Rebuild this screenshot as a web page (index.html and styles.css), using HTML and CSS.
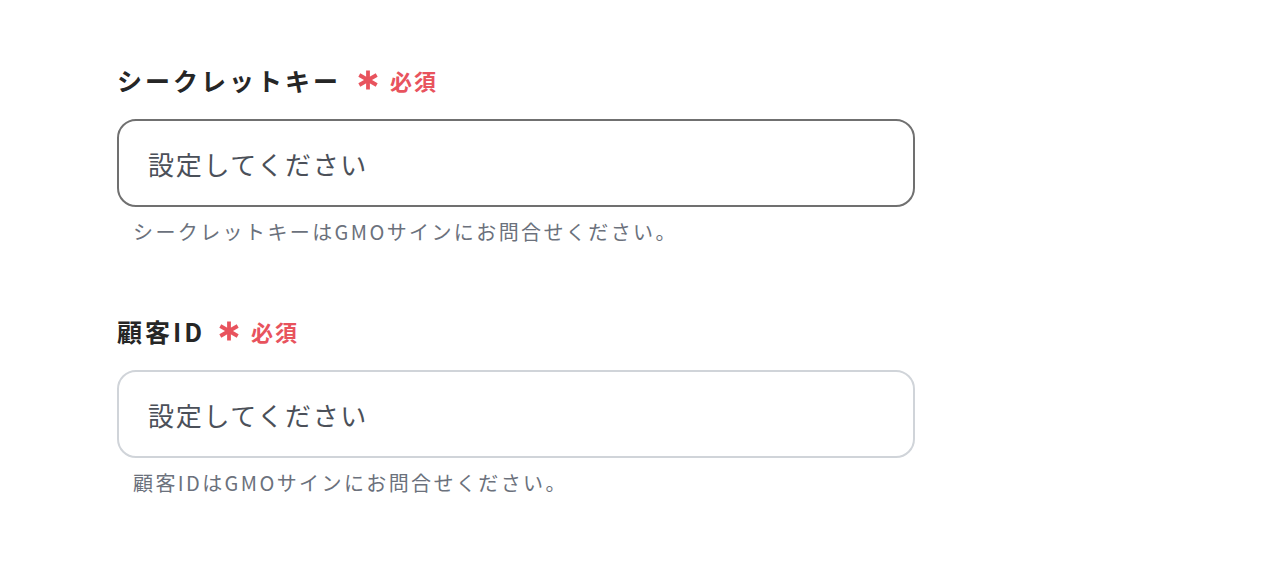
FILE: index.html
```html
<!DOCTYPE html>
<html lang="ja">
<head>
<meta charset="utf-8">
<link rel="stylesheet" href="styles.css">
</head>
<body>
<div class="form">
  <div class="field">
    <div class="label-row">
      <span class="label">シークレットキー</span>
      <span class="req">
        <svg class="ast" viewBox="0 0 22 20" width="22" height="20" aria-hidden="true">
          <g stroke="#e8535d" stroke-width="3.8" stroke-linecap="butt">
            <line x1="11" y1="0.5" x2="11" y2="19.5"/>
            <line x1="2.3" y1="5" x2="19.7" y2="15"/>
            <line x1="2.3" y1="15" x2="19.7" y2="5"/>
          </g>
        </svg>
        <span class="req-text">必須</span>
      </span>
    </div>
    <div class="input focused">設定してください</div>
    <div class="help">シークレットキーはGMOサインにお問合せください。</div>
  </div>
  <div class="field">
    <div class="label-row">
      <span class="label">顧客ID</span>
      <span class="req req-tight">
        <svg class="ast" viewBox="0 0 22 20" width="22" height="20" aria-hidden="true">
          <g stroke="#e8535d" stroke-width="3.8" stroke-linecap="butt">
            <line x1="11" y1="0.5" x2="11" y2="19.5"/>
            <line x1="2.3" y1="5" x2="19.7" y2="15"/>
            <line x1="2.3" y1="15" x2="19.7" y2="5"/>
          </g>
        </svg>
        <span class="req-text">必須</span>
      </span>
    </div>
    <div class="input">設定してください</div>
    <div class="help">顧客IDはGMOサインにお問合せください。</div>
  </div>
</div>
</body>
</html>
```
FILE: styles.css
```css
html, body {
  margin: 0;
  background: #ffffff;
  font-family: "Noto Sans CJK JP", "Noto Sans", sans-serif;
}
.form {
  padding: 65px 0 0 117px;
  display: flex;
  flex-direction: column;
  gap: 70px;
}
.field {
  display: flex;
  flex-direction: column;
  width: 798px;
}
.label-row {
  display: flex;
  align-items: center;
  height: 30px;
  gap: 16px;
}
.label {
  font-size: 25px;
  font-weight: 700;
  letter-spacing: 3px;
  color: #262626;
  line-height: 30px;
}
.req {
  display: flex;
  align-items: center;
  gap: 11px;
}
.req-tight {
  margin-left: -3px;
}
.ast {
  display: block;
}
.req-text {
  color: #e8535d;
  font-size: 22px;
  font-weight: 700;
  letter-spacing: 2px;
  line-height: 30px;
}
.input {
  margin-top: 24px;
  box-sizing: border-box;
  height: 88px;
  border: 2px solid #d0d4d9;
  border-radius: 19px;
  padding: 0 0 0 29px;
  display: flex;
  align-items: center;
  font-size: 26px;
  letter-spacing: 1.7px;
  color: #4b5059;
}
.input.focused {
  border-color: #707070;
}
.help {
  margin-top: 11px;
  line-height: 28px;
  padding-left: 16px;
  font-size: 20px;
  letter-spacing: 2.4px;
  color: #6b717c;
}
```
